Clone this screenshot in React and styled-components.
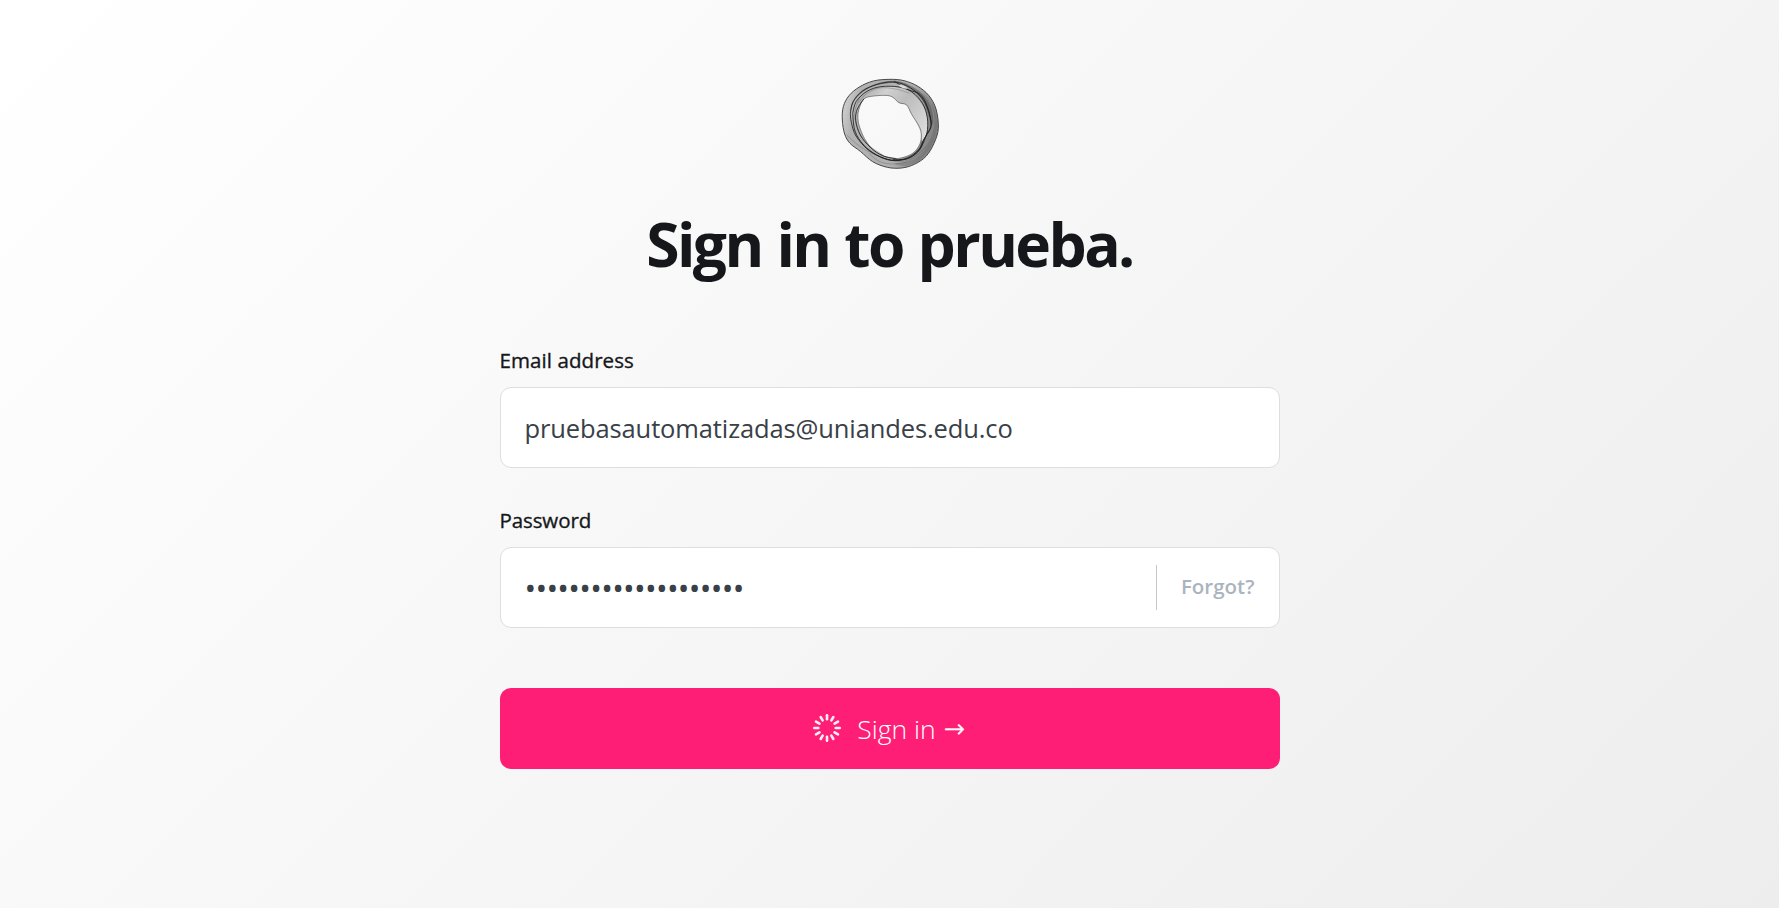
import React from "react";
import styled, { createGlobalStyle } from "styled-components";

const GlobalStyle = createGlobalStyle`
  * { box-sizing: border-box; }
  body {
    margin: 0;
    font-family: "Open Sans", "Noto Sans", sans-serif;
    color: #15171a;
  }
`;

const Page = styled.main`
  height: 908px;
  display: flex;
  flex-direction: column;
  align-items: center;
  overflow: hidden;
  background: linear-gradient(135deg, #ffffff 0%, #f6f6f6 50%, #ededed 100%);
`;

const Logo = styled.svg`
  display: block;
  width: 120px;
  height: 115px;
  margin: 65px 0 0 1px;
`;

const Title = styled.h1`
  margin: 22px 0 0;
  font-size: 60.5px;
  line-height: 84px;
  font-weight: 700;
  letter-spacing: -2.6px;
  word-spacing: 1.7px;
  white-space: nowrap;
`;

const Form = styled.form`
  width: 780px;
  margin-top: 59px;
  display: flex;
  flex-direction: column;
`;

const Field = styled.div`
  display: flex;
  flex-direction: column;
  margin-bottom: 37px;
`;

const Label = styled.label`
  height: 42px;
  line-height: 30px;
  font-size: 20.5px;
  letter-spacing: ${(p) => p.$spacing};
  -webkit-text-stroke: 0.35px currentColor;
`;

const InputBox = styled.div`
  display: flex;
  align-items: center;
  height: 81px;
  border: 1px solid #dddedf;
  border-radius: 11px;
  background: #fff;
  padding: 0 24px;
`;

const Input = styled.input`
  flex: 1;
  min-width: 0;
  height: 60px;
  padding: 0;
  border: 0;
  outline: 0;
  background: transparent;
  font-family: "Open Sans", sans-serif;
  font-size: ${(p) => p.$size};
  color: #394047;
  letter-spacing: ${(p) => p.$spacing};
`;

const Forgot = styled.a`
  height: 45px;
  padding-left: 24px;
  border-left: 1px solid #c5c7c9;
  font-size: 20.5px;
  line-height: 43px;
  font-weight: 600;
  color: #abb4be;
`;

const Submit = styled.button`
  display: flex;
  align-items: center;
  justify-content: center;
  height: 81px;
  margin-top: 23px;
  padding: 0 1px 0 0;
  border: 0;
  border-radius: 11px;
  background: #ff1e76;
  color: #fff;
  font-family: "Open Sans", sans-serif;
  font-size: 26.5px;
  font-weight: 300;
`;

const Spinner = styled.svg`
  width: 28px;
  height: 28px;
  margin: 0 16px 1px 0;
`;

const Arrow = styled.span`
  margin-left: 8px;
  font-family: "DejaVu Sans", sans-serif;
  font-size: 25px;
  -webkit-text-stroke: 0.5px currentColor;
`;

const spokes = Array.from({ length: 12 }, (_, i) => i * 30);

// Turns a list of points into a smooth curve.
function curve(points, closed = false) {
  const n = points.length;
  const at = (i) => (closed ? points[(i + n) % n] : points[Math.max(0, Math.min(n - 1, i))]);
  let d = `M${points[0]}`;
  for (let i = 0; i < (closed ? n : n - 1); i++) {
    const [a, b, c, e] = [at(i - 1), at(i), at(i + 1), at(i + 2)];
    d += `C${b[0] + (c[0] - a[0]) / 6},${b[1] + (c[1] - a[1]) / 6} ${c[0] - (e[0] - b[0]) / 6},${c[1] - (e[1] - b[1]) / 6} ${c}`;
  }
  return closed ? d + "Z" : d;
}

const outer = curve([[180, 43], [130, 48], [88, 66], [57, 92], [40, 125], [37, 165], [44, 207], [60, 235], [91, 259], [128, 290], [172, 307], [215, 309], [253, 298], [288, 274], [312, 235], [325, 190], [318, 132], [296, 91], [262, 63], [222, 47]], true);
const hole = curve([[103, 101], [124, 94], [165, 91], [187, 96], [207, 113], [230, 120], [245, 148], [268, 185], [274, 210], [270, 236], [254, 260], [230, 274], [197, 281], [164, 274], [132, 257], [108, 228], [94, 200], [85, 172], [84, 145], [91, 120]], true);
const fold = curve([[101, 102], [91, 120], [84, 143], [79, 120], [99, 88], [142, 68], [195, 65], [241, 82], [277, 119], [292, 163], [290, 203], [277, 229], [272, 201], [247, 150], [230, 120], [207, 113], [187, 96], [164, 91], [124, 94]], true);
const upperBand = curve([[62, 141], [75, 103], [111, 73], [154, 58], [202, 55], [246, 76], [282, 114], [303, 177], [310, 166], [303, 125], [282, 92], [249, 66], [202, 48], [148, 53], [95, 77], [67, 111]], true);
const rightBand = curve([[305, 117], [316, 162], [311, 207], [287, 250], [248, 285], [195, 296], [232, 302], [276, 280], [307, 235], [321, 181], [314, 134]], true);

const darkLines = [
  [[61, 145], [69, 111], [98, 78], [141, 58], [188, 51], [230, 62], [268, 90], [291, 126], [304, 179], [290, 208], [274, 244], [243, 273], [204, 286], [163, 280], [115, 255], [78, 213], [64, 172], [61, 145]],
  [[68, 145], [79, 109], [111, 79], [153, 65], [207, 66], [246, 81], [278, 116], [292, 158], [291, 204], [277, 232], [263, 261], [229, 282], [183, 286], [140, 270], [101, 240], [75, 198], [68, 145]],
  [[193, 49], [235, 74], [270, 88], [292, 125], [303, 182], [281, 224], [270, 253], [235, 280], [188, 284]],
  [[102, 101], [82, 132], [77, 166], [91, 210], [120, 246], [158, 272], [199, 281]],
];
const softLines = [
  [[50, 210], [84, 240], [124, 264], [173, 284], [224, 288], [264, 267], [300, 228], [315, 173], [306, 123], [281, 86]],
  [[90, 98], [77, 129], [75, 159], [89, 206], [119, 243], [159, 270]],
  [[86, 114], [108, 87], [148, 69], [196, 72], [239, 85]],
  [[118, 266], [147, 289], [190, 297], [241, 286], [289, 244]],
];

function RingLogo() {
  return (
    <Logo viewBox="0 0 360 345" fill="none" aria-hidden="true">
      <defs>
        <linearGradient id="ring" x1="40" y1="140" x2="325" y2="210" gradientUnits="userSpaceOnUse">
          <stop offset="0" stopColor="#cbcbcb" />
          <stop offset=".12" stopColor="#b2b2b2" />
          <stop offset=".6" stopColor="#b0b0b0" />
          <stop offset="1" stopColor="#7c7c7c" />
        </linearGradient>
        <linearGradient id="fold" x1="90" y1="60" x2="280" y2="210" gradientUnits="userSpaceOnUse">
          <stop offset="0" stopColor="#a0a0a0" />
          <stop offset=".3" stopColor="#d0d0d0" />
          <stop offset=".55" stopColor="#bcbcbc" />
          <stop offset="1" stopColor="#dcdcdc" />
        </linearGradient>
      </defs>
      <path d={outer + hole} fill="url(#ring)" fillRule="evenodd" />
      <path d={fold} fill="url(#fold)" />
      <path d={upperBand} fill="#555" fillOpacity=".6" />
      <path d={rightBand} fill="#606060" fillOpacity=".35" />
      <path d={outer} stroke="#484848" strokeWidth="3" />
      <path d={hole} stroke="#666" strokeWidth="2.2" />
      {softLines.map((points, i) => (
        <path key={i} d={curve(points)} stroke="#666" strokeWidth="2" strokeOpacity=".6" />
      ))}
      {darkLines.map((points, i) => (
        <path key={i} d={curve(points)} stroke="#1e1e1e" strokeWidth="2.8" strokeOpacity=".9" />
      ))}
      <path d="M205 59C218 59 230 65 233 71C223 72 210 68 205 59Z" fill="#dcdcdc" />
    </Logo>
  );
}

export default function App() {
  return (
    <Page>
      <GlobalStyle />
      <RingLogo />
      <Title>Sign in to prueba.</Title>
      <Form onSubmit={(e) => e.preventDefault()}>
        <Field>
          <Label htmlFor="email" $spacing="0.08px">Email address</Label>
          <InputBox>
            <Input id="email" type="text" defaultValue="pruebasautomatizadas@uniandes.edu.co" $size="25.5px" $spacing="-0.12px" />
          </InputBox>
        </Field>
        <Field>
          <Label htmlFor="password" $spacing="-0.1px">Password</Label>
          <InputBox>
            <Input id="password" type="password" defaultValue="abcdefghijklmnopqrst" $size="31px" $spacing="-0.7px" />
            <Forgot>Forgot?</Forgot>
          </InputBox>
        </Field>
        <Submit type="submit">
          <Spinner viewBox="-14 -14 28 28" aria-hidden="true">
            {spokes.map((a) => (
              <path key={a} d="M0 -8.7V-12.7" transform={`rotate(${a})`} stroke="#fff" strokeOpacity=".92" strokeWidth="2.6" strokeLinecap="round" />
            ))}
          </Spinner>
          <span>Sign in</span>
          <Arrow>→</Arrow>
        </Submit>
      </Form>
    </Page>
  );
}
